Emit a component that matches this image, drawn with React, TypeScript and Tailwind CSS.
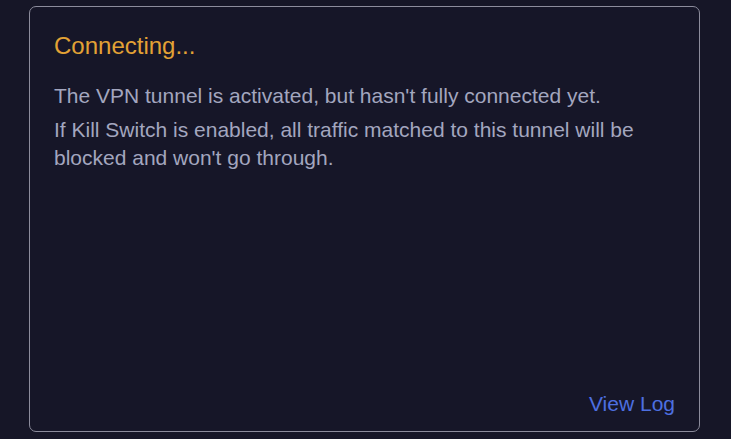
export default function App() {
  return (
    <div className="h-[439px] w-[731px] bg-[#161627] pt-[6px] pl-[29px] font-['Liberation_Sans',Arial,sans-serif]">
      <div className="flex h-[426px] w-[671px] flex-col rounded-[7px] border border-[#8c8c9c] bg-[#161628] px-[24px] pt-[24px] pb-[13px]">
        <h2 className="text-[24px] leading-[30px] text-[#e3a235]">Connecting...</h2>
        <p className="mt-[21px] text-[21px] leading-[28px] text-[#a3a6bf]">
          The VPN tunnel is activated, but hasn't fully connected yet.
        </p>
        <p className="mt-[6px] text-[21px] leading-[28px] text-[#a3a6bf]">
          If Kill Switch is enabled, all traffic matched to this tunnel will be blocked and won't go through.
        </p>
        <div className="mt-auto flex justify-end">
          <a className="text-[21px] leading-[28px] text-[#4d6fe0]">View Log</a>
        </div>
      </div>
    </div>
  );
}
